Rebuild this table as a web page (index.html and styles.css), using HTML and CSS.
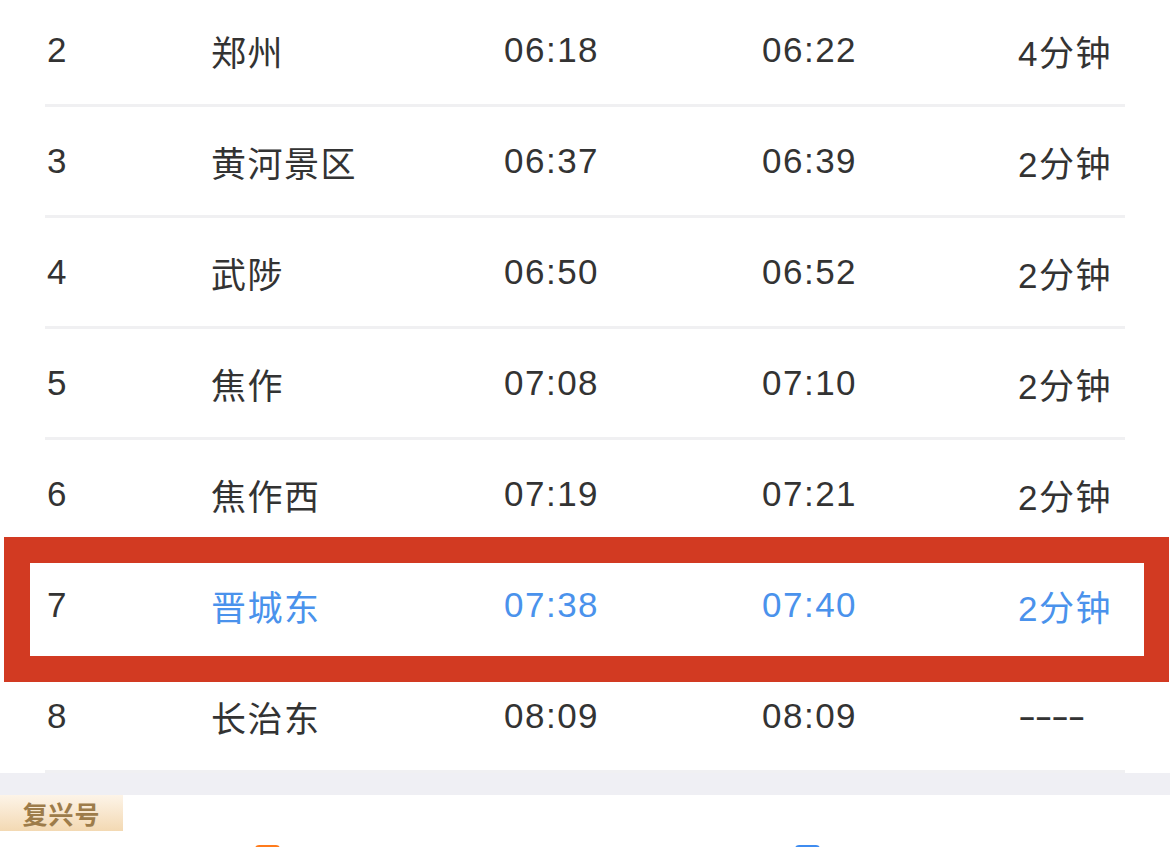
FILE: index.html
```html
<!DOCTYPE html>
<html lang="zh-CN">
<head>
<meta charset="utf-8">
<title>时刻表</title>
<link rel="stylesheet" href="styles.css">
</head>
<body>
<div class="page">
  <div class="stops">
    <div class="row"><span>2</span><span>郑州</span><span>06:18</span><span>06:22</span><span>4分钟</span></div>
    <div class="row"><span>3</span><span>黄河景区</span><span>06:37</span><span>06:39</span><span>2分钟</span></div>
    <div class="row"><span>4</span><span>武陟</span><span>06:50</span><span>06:52</span><span>2分钟</span></div>
    <div class="row"><span>5</span><span>焦作</span><span>07:08</span><span>07:10</span><span>2分钟</span></div>
    <div class="row"><span>6</span><span>焦作西</span><span>07:19</span><span>07:21</span><span>2分钟</span></div>
    <div class="row row-current"><span>7</span><span class="hl">晋城东</span><span class="hl">07:38</span><span class="hl">07:40</span><span class="hl">2分钟</span><div class="mark"></div></div>
    <div class="row"><span>8</span><span>长治东</span><span>08:09</span><span>08:09</span><span><span class="dash">----</span></span></div>
  </div>
  <div class="gap"></div>
  <div class="train-section">
    <div class="badge">复兴号</div>
    <div class="icons">
      <span class="icon icon-orange"></span>
      <span class="icon icon-blue"></span>
    </div>
  </div>
</div>
</body>
</html>
```
FILE: styles.css
```css
html, body {
  margin: 0;
  padding: 0;
  background: #ffffff;
}
body {
  width: 1170px;
  height: 847px;
  overflow: hidden;
  font-family: "Liberation Sans", "Noto Sans CJK SC", sans-serif;
  color: #333333;
}
.page {
  display: flex;
  flex-direction: column;
}
.stops {
  margin: -4px 45px 0 45px;
  display: flex;
  flex-direction: column;
}
.row {
  position: relative;
  height: 108px;
  border-bottom: 3px solid #f0f0f2;
  display: grid;
  grid-template-columns: 164px 293px 258px 256px 1fr;
  align-items: center;
  padding-left: 2px;
  font-size: 35px;
  letter-spacing: 1.5px;
  color: #333333;
}
.row span {
  white-space: nowrap;
}
.hl {
  color: #4a92ec;
}
.dash {
  display: inline-block;
  letter-spacing: -1px;
  transform: scaleX(1.55);
  transform-origin: left center;
}
.mark {
  position: absolute;
  top: -14px;
  bottom: -23px;
  left: -41px;
  right: -44px;
  border: 26px solid #d23a22;
  border-right-width: 25px;
  pointer-events: none;
}
.gap {
  height: 22px;
  background: #efeff4;
}
.train-section {
  display: flex;
  flex-direction: column;
  height: 52px;
}
.badge {
  width: 123px;
  height: 36px;
  display: flex;
  align-items: center;
  justify-content: center;
  background: linear-gradient(to bottom, #fdf4e8, #f3d9b3);
  color: #9d7c4a;
  font-family: "Noto Sans CJK SC", sans-serif;
  font-weight: 700;
  font-size: 25px;
  letter-spacing: 1px;
}
.icons {
  display: flex;
  margin-top: 14px;
  padding-left: 255px;
  gap: 515px;
}
.icon {
  display: block;
  width: 25px;
  height: 10px;
  border-radius: 4px 4px 0 0;
}
.icon-orange {
  background: #ff7b1c;
}
.icon-blue {
  background: #3f8cf0;
}
```
